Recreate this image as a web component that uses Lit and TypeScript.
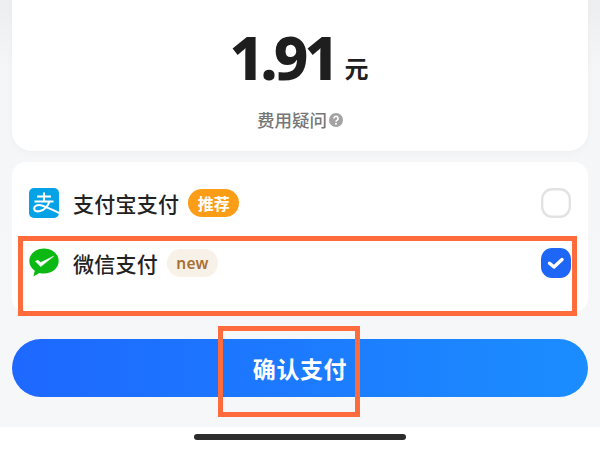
import { LitElement, html, css } from "lit";
import { customElement } from "lit/decorators.js";

@customElement("app-root")
export class AppRoot extends LitElement {
  static styles = css`
    :host { display: block; width: 600px; height: 450px; overflow: hidden; position: relative; background: #fff; font-family: "Noto Sans CJK SC", "Noto Sans", sans-serif; color: #1f1f1f; }
    .page { height: 427px; box-sizing: border-box; padding: 0 12px; background: linear-gradient(#eceef0 0, #f5f6f8 70px, #f6f7f9 100%); display: flex; flex-direction: column; }
    .fee { height: 151px; box-sizing: border-box; background: #fff; border-radius: 0 0 20px 20px; box-shadow: 0 2px 8px rgba(0,0,0,.03); display: flex; flex-direction: column; align-items: center; }
    .amount { margin-top: 21px; height: 72px; display: flex; align-items: flex-start; gap: 9px; line-height: 72px; margin-left: -2px; }
    .num { font-family: "Noto Sans", sans-serif; font-size: 60px; font-weight: 800; letter-spacing: -3.8px; color: #1e1e1e; }
    .unit { font-size: 24px; font-weight: 700; line-height: 24px; margin-top: 35px; }
    .q { margin-top: 15px; display: flex; align-items: center; gap: 2px; font-size: 17.5px; font-weight: 500; line-height: 24px; color: #777; }
    .q svg { width: 14px; height: 14px; }
    .methods { margin-top: 11px; height: 150px; box-sizing: border-box; background: #fff; border-radius: 14px; padding: 12px 17px 0; }
    .row { display: flex; align-items: center; height: 58px; }
    .row + .row { margin-top: 9px; height: 44px; }
    .logo { width: 30px; height: 30px; flex: none; margin-right: 14px; }
    .name { font-size: 21px; font-weight: 500; color: #222; letter-spacing: .25px; line-height: 28px; }
    .tag { margin-left: 9px; height: 28px; border-radius: 14px; display: flex; align-items: center; justify-content: center; box-sizing: border-box; }
    .tag.rec { width: 51px; background: #fb9d16; color: #fff; font-size: 16px; font-weight: 700; }
    .tag.new { width: 51px; background: #f7f1e8; color: #a87033; font-family: "Noto Sans", sans-serif; font-size: 15.5px; font-weight: 600; letter-spacing: .3px; }
    .check { margin-left: auto; width: 30px; height: 30px; flex: none; }
    .pay { margin-top: 27px; height: 58px; border: 0; padding: 0; border-radius: 29px; background: linear-gradient(90deg, #1e68ff, #1b8dff); color: #fff; font-family: inherit; font-size: 23px; font-weight: 700; letter-spacing: .6px; display: flex; align-items: center; justify-content: center; }
    .home { display: block; width: 212px; height: 6px; margin: 7px auto 0; border-radius: 3px; background: #2c2c2c; }
    .mark { position: absolute; box-sizing: border-box; border: 5px solid #fe6c3e; pointer-events: none; }
    .m1 { left: 18px; top: 236px; width: 559px; height: 80px; }
    .m2 { left: 218px; top: 326px; width: 142px; height: 91px; }
  `;

  render() {
    return html`
      <div class="page">
        <section class="fee">
          <div class="amount"><span class="num">1.91</span><span class="unit">元</span></div>
          <div class="q">费用疑问<svg viewBox="0 0 14 14"><circle cx="7" cy="7" r="7" fill="#a3a3a3"/><path d="M4.900 5.400a2.100 2.100 0 1 1 3.300 1.700c-.8.5-1.200.9-1.200 1.700" fill="none" stroke="#fff" stroke-width="1.600"/><circle cx="7" cy="10.800" r="1" fill="#fff"/></svg></div>
        </section>
        <section class="methods">
          <div class="row">
            <svg class="logo" viewBox="0 0 30 30">
              <rect width="30" height="30" rx="5" fill="#06a2e6"/>
              <path d="M8 8.500h14M15 4.500v9M5.500 13.500h19M20.500 13.500c-1.500 4.600-5 8.300-9.500 9.600-3.300.9-5.800-.2-5.800-2.600 0-2.700 3.200-4 6.500-3.300 4.500.9 9.500 3.800 18.800 7.800" fill="none" stroke="#fff" stroke-width="2.100"/>
            </svg>
            <span class="name">支付宝支付</span><span class="tag rec">推荐</span>
            <svg class="check" viewBox="0 0 30 30"><rect x="1.200" y="1.200" width="27.600" height="27.600" rx="10" fill="#fff" stroke="#e3e3e3" stroke-width="2.400"/></svg>
          </div>
          <div class="row">
            <svg class="logo" viewBox="0 0 30 30">
              <path d="M15 .5C6.900.5.300 5.800.3 13c0 4 2.100 7.400 5.500 9.700l-1.400 5.800 6-3.500c1.400.4 3 .5 4.600.5 8.100 0 14.700-5.300 14.700-12.500S23.100.5 15 .5z" fill="#0bb913"/>
              <path d="M6.500 13.300l2.300-1 3 2.300 12.700-6.300L11.700 18.600z" fill="#fff" stroke="#fff" stroke-width=".6" stroke-linejoin="round"/>
            </svg>
            <span class="name">微信支付</span><span class="tag new">new</span>
            <svg class="check" viewBox="0 0 30 30"><rect width="30" height="30" rx="11" fill="#1e66f5"/><path d="M8.500 15.200l4.500 3.800 8-7.500" fill="none" stroke="#fff" stroke-width="3.400" stroke-linecap="round" stroke-linejoin="round"/></svg>
          </div>
        </section>
        <button class="pay">确认支付</button>
      </div>
      <span class="home"></span>
      <div class="mark m1"></div>
      <div class="mark m2"></div>
    `;
  }
}
